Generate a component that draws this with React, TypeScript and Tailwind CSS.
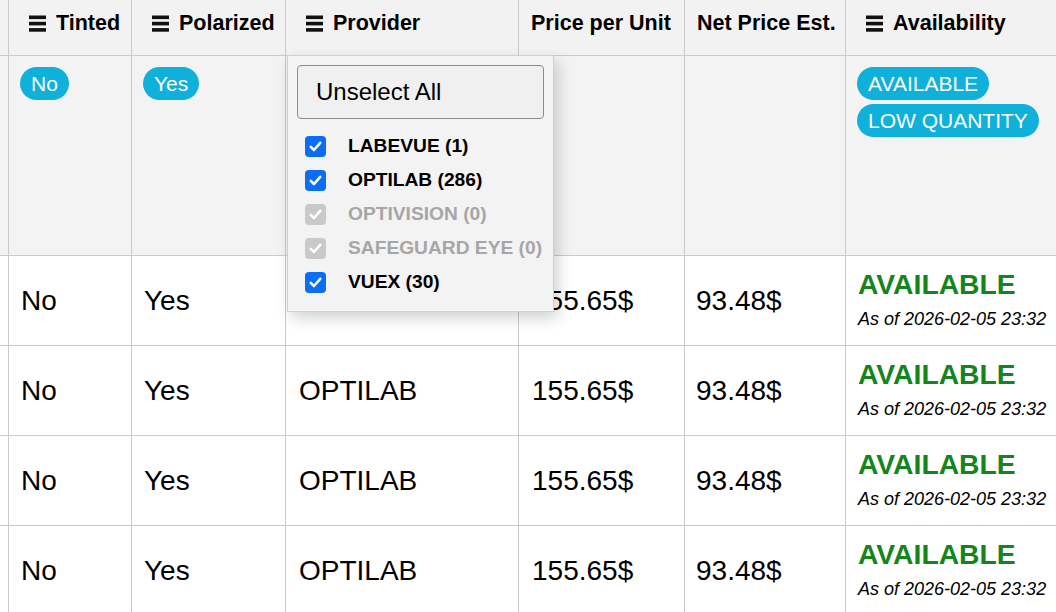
import React from "react";

const Menu = () => (
  <svg width="17" height="17" viewBox="0 0 17 17" className="shrink-0">
    <rect x="0" y="0.5" width="17" height="3.6" fill="#111" />
    <rect x="0" y="6.8" width="17" height="3.6" fill="#111" />
    <rect x="0" y="13.1" width="17" height="3.6" fill="#111" />
  </svg>
);

const Check = ({ disabled }: { disabled?: boolean }) => (
  <div
    className={`w-[21px] h-[21px] rounded-[4px] flex items-center justify-center shrink-0 ${
      disabled ? "bg-[#c9c9c9]" : "bg-[#0b6cf5]"
    }`}
  >
    <svg width="15" height="15" viewBox="0 0 15 15">
      <path
        d="M2.8 7.8 L6 11 L12.2 3.8"
        fill="none"
        stroke="white"
        strokeWidth="2.6"
        strokeLinecap="round"
        strokeLinejoin="round"
      />
    </svg>
  </div>
);

const Pill = ({ children }: { children: React.ReactNode }) => (
  <span className="inline-flex h-[33px] items-center rounded-full bg-[#0fb0da] px-[11px] text-[21px] leading-[33px] text-white whitespace-nowrap">
    {children}
  </span>
);

const cell = "border-r border-b border-[#cbcbcb] overflow-hidden";

const HeadCell = ({ label, icon }: { label: string; icon?: boolean }) => (
  <div className={`${cell} bg-[#f2f2f2] flex items-start pt-[12px] ${icon ? "pl-[20px]" : "pl-[12px]"}`}>
    {icon && (
      <div className="mt-[3px] mr-[10px]">
        <Menu />
      </div>
    )}
    <span className="text-[21.5px] leading-[22px] font-bold whitespace-nowrap">{label}</span>
  </div>
);

const DataRow = () => (
  <>
    <div className={`${cell} bg-white`} />
    <div className={`${cell} bg-white flex items-center pl-[12px] text-[28px]`}>No</div>
    <div className={`${cell} bg-white flex items-center pl-[12px] text-[28px]`}>Yes</div>
    <div className={`${cell} bg-white flex items-center pl-[13px] text-[28px]`}>OPTILAB</div>
    <div className={`${cell} bg-white flex items-center pl-[13px] text-[28px]`}>155.65$</div>
    <div className={`${cell} bg-white flex items-center pl-[11px] text-[28px]`}>93.48$</div>
    <div className={`${cell} bg-white flex flex-col justify-center pl-[12px] pb-[4px] overflow-visible`}>
      <div className="text-[28.3px] leading-[32px] font-bold text-[#14851b] whitespace-nowrap">AVAILABLE</div>
      <div className="mt-[8px] text-[18px] leading-[22px] italic whitespace-nowrap">As of 2026-02-05 23:32</div>
    </div>
  </>
);

const items: { label: string; disabled?: boolean }[] = [
  { label: "LABEVUE (1)" },
  { label: "OPTILAB (286)" },
  { label: "OPTIVISION (0)", disabled: true },
  { label: "SAFEGUARD EYE (0)", disabled: true },
  { label: "VUEX (30)" },
];

export default function App() {
  return (
    <div
      className="relative w-[1056px] h-[612px] overflow-hidden bg-white text-black"
      style={{ fontFamily: '"Liberation Sans", Arial, Helvetica, sans-serif' }}
    >
      <div className="grid grid-cols-[9px_123px_154px_233px_166px_161px_211px] grid-rows-[56px_200px_90px_90px_90px_90px]">
        <div className={`${cell} bg-[#f2f2f2]`} />
        <HeadCell label="Tinted" icon />
        <HeadCell label="Polarized" icon />
        <HeadCell label="Provider" icon />
        <HeadCell label="Price per Unit" />
        <HeadCell label="Net Price Est." />
        <HeadCell label="Availability" icon />

        <div className={`${cell} bg-[#f3f3f3]`} />
        <div className={`${cell} bg-[#f3f3f3] pl-[11px] pt-[11px]`}>
          <Pill>No</Pill>
        </div>
        <div className={`${cell} bg-[#f3f3f3] pl-[11px] pt-[11px]`}>
          <Pill>Yes</Pill>
        </div>
        <div className={`${cell} bg-[#f3f3f3]`} />
        <div className={`${cell} bg-[#f3f3f3]`} />
        <div className={`${cell} bg-[#f3f3f3]`} />
        <div className={`${cell} bg-[#f3f3f3] pl-[11px] pt-[11px] flex flex-col items-start gap-[4px]`}>
          <Pill>AVAILABLE</Pill>
          <Pill>LOW QUANTITY</Pill>
        </div>

        <DataRow />
        <DataRow />
        <DataRow />
        <DataRow />
      </div>

      <div className="absolute left-[287px] top-[55px] w-[267px] border border-[#d0d0d0] bg-[#f3f3f3] px-[9px] pt-[9px] pb-[12px] shadow-[4px_6px_14px_rgba(0,0,0,0.18)]">
        <button className="block w-full h-[54px] rounded-[4px] border border-[#8c8c8c] bg-[#f0f0f0] pl-[18px] text-left text-[24px] leading-[28px]">
          Unselect All
        </button>
        <div className="mt-[10px] flex flex-col">
          {items.map((it) => (
            <div key={it.label} className="flex h-[34px] items-center pl-[8px]">
              <Check disabled={it.disabled} />
              <span
                className={`ml-[22px] text-[19.2px] font-bold whitespace-nowrap ${
                  it.disabled ? "text-[#a6a6a6]" : "text-black"
                }`}
              >
                {it.label}
              </span>
            </div>
          ))}
        </div>
      </div>
    </div>
  );
}
